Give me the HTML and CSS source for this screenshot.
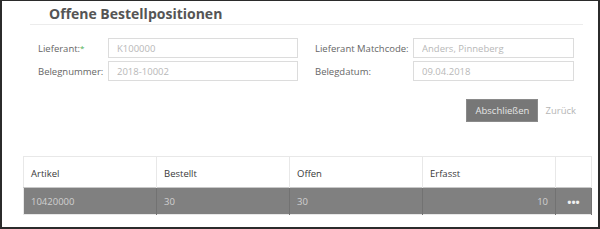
FILE: index.html
```html
<!DOCTYPE html>
<html lang="de">
<head>
	<meta charset="UTF-8">
	<title>Offene Bestellpositionen</title>
	<link rel="stylesheet" href="styles.css">
</head>
<body>
<div class="frame">
	<h1 class="title">Offene Bestellpositionen</h1>
	<div class="divider"></div>

	<div class="form">
		<div class="form-row">
			<div class="field">
				<label class="field-label">Lieferant:<span class="req">*</span></label>
				<input class="field-input wide" type="text" placeholder="K100000">
			</div>
			<div class="field">
				<label class="field-label right">Lieferant Matchcode:</label>
				<input class="field-input" type="text" placeholder="Anders, Pinneberg">
			</div>
		</div>
		<div class="form-row">
			<div class="field">
				<label class="field-label">Belegnummer:</label>
				<input class="field-input wide" type="text" placeholder="2018-10002">
			</div>
			<div class="field">
				<label class="field-label right">Belegdatum:</label>
				<input class="field-input" type="text" placeholder="09.04.2018">
			</div>
		</div>
	</div>

	<div class="actions">
		<button class="btn-primary">Abschließen</button>
		<button class="btn-link">Zurück</button>
	</div>

	<table class="grid">
		<thead>
			<tr>
				<th class="col">Artikel</th>
				<th class="col">Bestellt</th>
				<th class="col">Offen</th>
				<th class="col">Erfasst</th>
				<th class="col-menu"></th>
			</tr>
		</thead>
		<tbody>
			<tr class="selected">
				<td>10420000</td>
				<td>30</td>
				<td>30</td>
				<td class="num">10</td>
				<td class="menu">&bull;&bull;&bull;</td>
			</tr>
		</tbody>
	</table>
</div>
</body>
</html>
```

FILE: styles.css
```css
* {
	margin: 0;
	padding: 0;
	box-sizing: border-box;
}

body {
	font-family: "Open Sans", "Liberation Sans", sans-serif;
	background: #ffffff;
}

.frame {
	width: 600px;
	height: 229px;
	border: 2px solid #2b2b2b;
	border-top-width: 1px;
	background: #ffffff;
}

.title {
	font-size: 14px;
	font-weight: 700;
	color: #555555;
	padding-left: 47px;
	height: 22px;
	line-height: 26px;
}

.divider {
	margin: 1px 15px 0 28px;
	border-bottom: 1px solid #ececec;
}

.form {
	padding: 13px 0 0 36px;
	font-size: 9.5px;
}

.form-row {
	display: flex;
	margin-bottom: 3px;
}

.field {
	display: flex;
	align-items: center;
}

.field-label {
	width: 70px;
	color: #666666;
	white-space: nowrap;
}

.field-label.right {
	width: 98px;
	margin-left: 17px;
}

.req {
	color: #4caf50;
	font-size: 8px;
	vertical-align: top;
}

.field-input {
	width: 161px;
	height: 20px;
	border: 1px solid #dcdcdc;
	padding: 0 8px;
	font-family: inherit;
	font-size: 9.5px;
	color: #999999;
}

.field-input.wide {
	width: 190px;
}

.field-input::placeholder {
	color: #b8b8b8;
}

.actions {
	display: flex;
	justify-content: flex-end;
	align-items: center;
	padding: 15px 22px 0 0;
}

.btn-primary {
	width: 72px;
	height: 23px;
	background: #777777;
	border: 1px solid #8a8a8a;
	color: #e6e6e6;
	font-family: inherit;
	font-size: 9.5px;
}

.btn-link {
	background: none;
	border: none;
	color: #b5b5b5;
	font-family: inherit;
	font-size: 9.5px;
	margin-left: 7px;
}

.grid {
	margin: 34px 0 0 21px;
	width: 568px;
	table-layout: fixed;
	border-collapse: collapse;
	font-size: 9.5px;
	border: 1px solid #e8e8e8;
}

.grid th {
	height: 31px;
	text-align: left;
	font-weight: 400;
	color: #3a3a3a;
	padding: 2px 7px 0;
	border-right: 1px solid #e8e8e8;
}

.grid .col {
	width: 133px;
}

.grid .col-menu {
	width: 36px;
}

.grid td {
	height: 27px;
	padding: 0 7px;
	color: #d0d0d0;
	background: #808080;
	border-right: 1px solid #727272;
	border-top: 1px solid #c8c8c8;
}

.grid td.num {
	text-align: right;
}

.grid td.menu {
	text-align: center;
	color: #f0f0f0;
	font-size: 11px;
	font-weight: 700;
	padding: 0;
}
```
